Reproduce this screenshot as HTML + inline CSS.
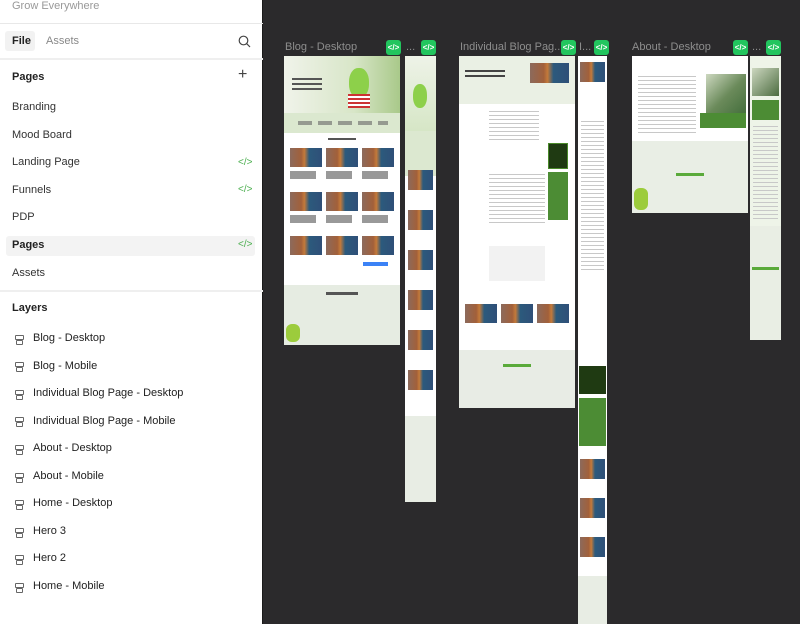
<!DOCTYPE html>
<html><head><meta charset="utf-8"><style>
*{margin:0;padding:0;box-sizing:border-box}
body{width:800px;height:624px;overflow:hidden;background:#2b2a2c;font-family:"Liberation Sans",Arial,sans-serif;position:relative}
.sb{position:absolute;left:0;top:0;width:263px;height:624px;background:#fff;border-right:1px solid #1a1a1a}
.t{position:absolute;font-size:11px;color:#333;white-space:nowrap}
.hl{position:absolute;left:0;width:263px;height:1px;background:#e8e8e8}
.code{position:absolute;left:238px;font-size:10px;color:#4caf50}
.li{position:absolute;left:15px;width:7px;height:8px}
.li:before{content:"";position:absolute;left:0;top:0;width:7px;height:3px;border:1px solid #666;border-radius:1px}
.li:after{content:"";position:absolute;left:1px;top:5px;width:5px;height:3px;border:1px solid #666;border-radius:1px}
.f{position:absolute;background:#fff;overflow:hidden}
.lbl{position:absolute;font-size:11px;color:#8d8d8d;white-space:nowrap}
.bd{position:absolute;width:15px;height:15px;background:#22c55e;border-radius:3px;color:#fff;font-size:8px;font-weight:bold;text-align:center;line-height:15px}
.a{position:absolute}
.ph{position:absolute;background:linear-gradient(90deg,#8c6a5c 0%,#a2603a 35%,#c47a3a 45%,#2c5a7c 60%,#2f4f78 100%)}
.tx{position:absolute;background:repeating-linear-gradient(#c8c8c8 0 1px,transparent 1px 4px)}
</style></head><body>
<div class="sb">
<div class="t" style="left:12px;top:0;color:#999">Grow Everywhere</div>
<div class="hl" style="top:23px"></div>
<div class="a" style="left:5px;top:31px;width:30px;height:20px;background:#f2f2f2;border-radius:3px"></div>
<div class="t" style="left:12px;top:35px;font-weight:bold;color:#222">File</div>
<div class="t" style="left:46px;top:35px;color:#888">Assets</div>
<svg class="a" style="left:238px;top:35px" width="13" height="13" viewBox="0 0 13 13"><circle cx="5.5" cy="5.5" r="4.3" fill="none" stroke="#444" stroke-width="1.2"/><path d="M8.6 8.6L12 12" stroke="#444" stroke-width="1.2"/></svg>
<div class="hl" style="top:58px;height:2px;background:#efefef"></div>
<div class="t" style="left:12px;top:71px;font-weight:bold;color:#222">Pages</div>
<div class="t" style="left:238px;top:66px;font-size:16px;color:#444">+</div>
<div class="t" style="left:12px;top:101px">Branding</div>
<div class="t" style="left:12px;top:129px">Mood Board</div>
<div class="t" style="left:12px;top:156px">Landing Page</div><div class="code" style="top:157px">&lt;/&gt;</div>
<div class="t" style="left:12px;top:184px">Funnels</div><div class="code" style="top:184px">&lt;/&gt;</div>
<div class="t" style="left:12px;top:211px">PDP</div>
<div class="a" style="left:6px;top:236px;width:249px;height:20px;background:#f3f3f3;border-radius:3px"></div>
<div class="t" style="left:12px;top:239px;font-weight:bold;color:#222">Pages</div><div class="code" style="top:239px">&lt;/&gt;</div>
<div class="t" style="left:12px;top:267px">Assets</div>
<div class="hl" style="top:290px;height:2px;background:#efefef"></div>
<div class="t" style="left:12px;top:302px;font-weight:bold;color:#222">Layers</div>
<div class="li" style="top:335px"></div><div class="t" style="left:33px;top:332px;color:#222">Blog - Desktop</div>
<div class="li" style="top:362px"></div><div class="t" style="left:33px;top:360px;color:#222">Blog - Mobile</div>
<div class="li" style="top:390px"></div><div class="t" style="left:33px;top:387px;color:#222">Individual Blog Page - Desktop</div>
<div class="li" style="top:417px"></div><div class="t" style="left:33px;top:415px;color:#222">Individual Blog Page - Mobile</div>
<div class="li" style="top:445px"></div><div class="t" style="left:33px;top:442px;color:#222">About - Desktop</div>
<div class="li" style="top:473px"></div><div class="t" style="left:33px;top:470px;color:#222">About - Mobile</div>
<div class="li" style="top:500px"></div><div class="t" style="left:33px;top:497px;color:#222">Home - Desktop</div>
<div class="li" style="top:528px"></div><div class="t" style="left:33px;top:525px;color:#222">Hero 3</div>
<div class="li" style="top:555px"></div><div class="t" style="left:33px;top:552px;color:#222">Hero 2</div>
<div class="li" style="top:583px"></div><div class="t" style="left:33px;top:580px;color:#222">Home - Mobile</div>
</div>

<div class="lbl" style="left:285px;top:41px">Blog - Desktop</div><div class="bd" style="left:386px;top:40px">&lt;/&gt;</div>
<div class="lbl" style="left:406px;top:41px">...</div><div class="bd" style="left:421px;top:40px">&lt;/&gt;</div>
<div class="lbl" style="left:460px;top:41px">Individual Blog Pag...</div><div class="bd" style="left:561px;top:40px">&lt;/&gt;</div>
<div class="lbl" style="left:579px;top:41px">I...</div><div class="bd" style="left:594px;top:40px">&lt;/&gt;</div>
<div class="lbl" style="left:632px;top:41px">About - Desktop</div><div class="bd" style="left:733px;top:40px">&lt;/&gt;</div>
<div class="lbl" style="left:752px;top:41px">...</div><div class="bd" style="left:766px;top:40px">&lt;/&gt;</div>

<!-- Blog desktop -->
<div class="f" style="left:284px;top:56px;width:116px;height:289px">
<div class="a" style="left:0;top:0;width:116px;height:57px;background:linear-gradient(90deg,#f0f3ea,#d8e6c8 60%,#a9c98a)"></div>
<div class="a" style="left:8px;top:22px;width:30px;height:12px;background:repeating-linear-gradient(#555 0 2px,transparent 2px 5px)"></div>
<div class="a" style="left:65px;top:12px;width:20px;height:30px;background:#8dd04a;border-radius:45%"></div>
<div class="a" style="left:64px;top:38px;width:22px;height:14px;background:repeating-linear-gradient(#c33 0 2px,#fff 2px 4px)"></div>
<div class="a" style="left:0;top:57px;width:116px;height:20px;background:#dbe8cf"></div>
<div class="a" style="left:14px;top:65px;width:90px;height:4px;background:repeating-linear-gradient(90deg,#666 0 14px,transparent 14px 20px);opacity:.6"></div>
<div class="a" style="left:44px;top:82px;width:28px;height:2px;background:#555"></div>
<div class="ph" style="left:6px;top:92px;width:32px;height:19px"></div><div class="ph" style="left:42px;top:92px;width:32px;height:19px"></div><div class="ph" style="left:78px;top:92px;width:32px;height:19px"></div>
<div class="tx" style="left:6px;top:115px;width:104px;height:8px;background:repeating-linear-gradient(90deg,#999 0 26px,transparent 26px 36px)"></div>
<div class="ph" style="left:6px;top:136px;width:32px;height:19px"></div><div class="ph" style="left:42px;top:136px;width:32px;height:19px"></div><div class="ph" style="left:78px;top:136px;width:32px;height:19px"></div>
<div class="tx" style="left:6px;top:159px;width:104px;height:8px;background:repeating-linear-gradient(90deg,#999 0 26px,transparent 26px 36px)"></div>
<div class="ph" style="left:6px;top:180px;width:32px;height:19px"></div><div class="ph" style="left:42px;top:180px;width:32px;height:19px"></div><div class="ph" style="left:78px;top:180px;width:32px;height:19px"></div>
<div class="a" style="left:79px;top:206px;width:25px;height:4px;background:#3b82f6"></div>
<div class="a" style="left:0;top:229px;width:116px;height:60px;background:#e6ece2"></div>
<div class="a" style="left:42px;top:236px;width:32px;height:3px;background:#555"></div>
<div class="a" style="left:2px;top:268px;width:14px;height:18px;background:#9ccc3c;border-radius:6px"></div>
</div>
<!-- Blog mobile -->
<div class="f" style="left:405px;top:56px;width:31px;height:446px">
<div class="a" style="left:0;top:0;width:31px;height:75px;background:linear-gradient(#eef3e8,#d6e6c6)"></div>
<div class="a" style="left:8px;top:28px;width:14px;height:24px;background:#8dd04a;border-radius:45%"></div>
<div class="a" style="left:0;top:75px;width:31px;height:45px;background:#dce8d0"></div>
<div class="ph" style="left:3px;top:114px;width:25px;height:20px"></div>
<div class="ph" style="left:3px;top:154px;width:25px;height:20px"></div>
<div class="ph" style="left:3px;top:194px;width:25px;height:20px"></div>
<div class="ph" style="left:3px;top:234px;width:25px;height:20px"></div>
<div class="ph" style="left:3px;top:274px;width:25px;height:20px"></div>
<div class="ph" style="left:3px;top:314px;width:25px;height:20px"></div>
<div class="a" style="left:0;top:360px;width:31px;height:86px;background:#e8ede4"></div>
</div>
<!-- Individual desktop -->
<div class="f" style="left:459px;top:56px;width:116px;height:352px">
<div class="a" style="left:0;top:0;width:116px;height:48px;background:#eaf0e4"></div>
<div class="a" style="left:6px;top:14px;width:40px;height:10px;background:repeating-linear-gradient(#444 0 2px,transparent 2px 5px)"></div>
<div class="ph" style="left:71px;top:7px;width:39px;height:20px"></div>
<div class="tx" style="left:30px;top:55px;width:50px;height:32px"></div>
<div class="tx" style="left:30px;top:118px;width:56px;height:50px"></div>
<div class="a" style="left:89px;top:87px;width:20px;height:26px;background:#1f3a12;border:1px solid #4a8a2a"></div>
<div class="a" style="left:89px;top:116px;width:20px;height:48px;background:#4c8c34"></div>
<div class="a" style="left:30px;top:190px;width:56px;height:35px;background:#f2f2f2"></div>
<div class="ph" style="left:6px;top:248px;width:32px;height:19px"></div><div class="ph" style="left:42px;top:248px;width:32px;height:19px"></div><div class="ph" style="left:78px;top:248px;width:32px;height:19px"></div>
<div class="a" style="left:0;top:294px;width:116px;height:58px;background:#e8ece5"></div>
<div class="a" style="left:44px;top:308px;width:28px;height:3px;background:#5aaa3a"></div>
</div>
<!-- Individual mobile -->
<div class="f" style="left:578px;top:56px;width:29px;height:568px">
<div class="ph" style="left:2px;top:6px;width:25px;height:20px"></div>
<div class="tx" style="left:3px;top:65px;width:23px;height:150px"></div>
<div class="a" style="left:1px;top:310px;width:27px;height:28px;background:#1f3a12"></div>
<div class="a" style="left:1px;top:342px;width:27px;height:48px;background:#4c8c34"></div>
<div class="ph" style="left:2px;top:403px;width:25px;height:20px"></div>
<div class="ph" style="left:2px;top:442px;width:25px;height:20px"></div>
<div class="ph" style="left:2px;top:481px;width:25px;height:20px"></div>
<div class="a" style="left:0;top:520px;width:29px;height:48px;background:#e8ede4"></div>
</div>
<!-- About desktop -->
<div class="f" style="left:632px;top:56px;width:116px;height:157px">
<div class="tx" style="left:6px;top:20px;width:58px;height:60px"></div>
<div class="a" style="left:74px;top:18px;width:40px;height:45px;background:linear-gradient(135deg,#cdd8c0,#6a8a5a 50%,#3f6a38)"></div>
<div class="a" style="left:68px;top:57px;width:46px;height:15px;background:#4c8c34"></div>
<div class="a" style="left:0;top:85px;width:116px;height:72px;background:#e9eee5"></div>
<div class="a" style="left:44px;top:117px;width:28px;height:3px;background:#5aaa3a"></div>
<div class="a" style="left:2px;top:132px;width:14px;height:22px;background:#9ccc3c;border-radius:6px"></div>
</div>
<!-- About mobile -->
<div class="f" style="left:750px;top:56px;width:31px;height:284px">
<div class="a" style="left:0;top:0;width:31px;height:170px;background:#eef4e8"></div>
<div class="a" style="left:2px;top:12px;width:27px;height:28px;background:linear-gradient(135deg,#cdd8c0,#4c6c40)"></div>
<div class="a" style="left:2px;top:44px;width:27px;height:20px;background:#4c8c34"></div>
<div class="tx" style="left:3px;top:70px;width:25px;height:95px"></div>
<div class="a" style="left:0;top:170px;width:31px;height:114px;background:#e9eee4"></div>
<div class="a" style="left:2px;top:211px;width:27px;height:3px;background:#5aaa3a"></div>
</div>
</body></html>
